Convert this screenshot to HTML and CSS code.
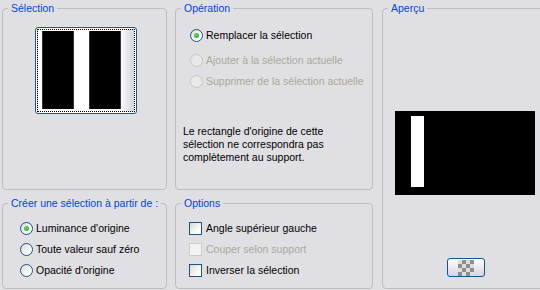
FILE: index.html
```html
<!DOCTYPE html>
<html lang="fr">
<head>
<meta charset="utf-8">
<title>Sélection</title>
<link rel="stylesheet" href="styles.css">
</head>
<body>
<div class="dialog">
  <div class="col col-1">
    <section class="group group-top">
      <div class="legend">Sélection</div>
      <div class="thumb">
        <div class="thumb-dots">
          <span class="blk"></span>
          <span class="spacer"></span>
          <span class="blk"></span>
        </div>
      </div>
    </section>
    <section class="group group-bottom">
      <div class="legend">Créer une sélection à partir de :</div>
      <div class="list list-src">
        <div class="row"><span class="radio on"></span>Luminance d'origine</div>
        <div class="row"><span class="radio"></span>Toute valeur sauf zéro</div>
        <div class="row"><span class="radio"></span>Opacité d'origine</div>
      </div>
    </section>
  </div>
  <div class="col col-2">
    <section class="group group-top">
      <div class="legend">Opération</div>
      <div class="list list-op">
        <div class="row"><span class="radio on"></span>Remplacer la sélection</div>
        <div class="row row-2 dis"><span class="radio off"></span>Ajouter à la sélection actuelle</div>
        <div class="row dis"><span class="radio off"></span>Supprimer de la sélection actuelle</div>
      </div>
      <p class="note">Le rectangle d'origine de cette<br>sélection ne correspondra pas<br>complètement au support.</p>
    </section>
    <section class="group group-bottom">
      <div class="legend">Options</div>
      <div class="list list-opt">
        <div class="row row-check"><span class="check"></span>Angle supérieur gauche</div>
        <div class="row row-check dis"><span class="check off"></span>Couper selon support</div>
        <div class="row row-check"><span class="check"></span>Inverser la sélection</div>
      </div>
    </section>
  </div>
  <div class="col col-3">
    <section class="group group-full">
      <div class="legend">Aperçu</div>
      <div class="preview"><span class="preview-bar"></span></div>
      <div class="btn"><span class="checker"></span></div>
    </section>
  </div>
</div>
</body>
</html>
```
FILE: styles.css
```css
html, body {
  margin: 0;
  padding: 0;
}
body {
  width: 540px;
  height: 290px;
  overflow: hidden;
  background: #e0dfe3;
  color: #000;
  font-family: "Liberation Sans", Arial, sans-serif;
  font-size: 10.5px;
  line-height: 13px;
}
.dialog {
  display: flex;
  align-items: flex-start;
  box-sizing: border-box;
  height: 290px;
  padding: 8px 0 0 2px;
}
.col {
  display: flex;
  flex-direction: column;
  gap: 13px;
  flex: none;
}
.col-1 { width: 165px; }
.col-2 { width: 198px; margin-left: 8px; }
.col-3 { width: 180px; margin-left: 9px; }

.group {
  border: 1px solid #bdbdc2;
  border-radius: 4px;
  box-sizing: border-box;
}
.group-top { height: 182px; }
.group-bottom { height: 86px; }
.group-full { height: 281px; }

.legend {
  width: max-content;
  margin: -7px 0 0 5px;
  padding: 0 3px;
  background: #e0dfe3;
  color: #0046d5;
  line-height: 13px;
}

/* selection thumbnail */
.thumb {
  width: 102px;
  height: 87px;
  margin: 12px 0 0 32px;
  padding: 1px;
  box-sizing: border-box;
  border: 1px solid #1f5589;
  border-radius: 3px;
  background: #fff;
}
.thumb-dots {
  display: flex;
  height: 100%;
  box-sizing: border-box;
  border: 1px dotted #000;
  padding: 1px 0 2px 4px;
  background: linear-gradient(90deg, #fff 85%, #d3d3de);
}
.blk {
  width: 32px;
  background: #000;
  border-left: 1px solid #333;
  border-right: 1px solid #333;
  box-sizing: border-box;
}
.spacer { width: 15px; }

/* radio / checkbox lists */
.list {
  display: flex;
  flex-direction: column;
}
.row {
  display: flex;
  align-items: center;
  gap: 3px;
  height: 21px;
  white-space: nowrap;
}
.row-check { gap: 4px; }
.list-src { margin-top: 8px; padding-left: 17px; }
.list-op { margin-top: 10px; padding-left: 14px; }
.list-op .row-2 { margin-top: 4px; }
.list-opt { margin-top: 8px; padding-left: 13px; }

.dis { color: #aca899; }

.radio {
  display: grid;
  place-items: center;
  flex: none;
  width: 13px;
  height: 13px;
  box-sizing: border-box;
  border: 1px solid #1d5281;
  border-radius: 50%;
  background: linear-gradient(135deg, #d9d9d4, #fff 75%);
}
.radio.on::after {
  content: "";
  width: 5px;
  height: 5px;
  border-radius: 50%;
  background: radial-gradient(circle at 40% 40%, #6ad866, #1f9f1f);
}
.radio.off {
  border-color: #cac8bb;
  background: #e8e8eb;
}

.check {
  flex: none;
  width: 13px;
  height: 13px;
  box-sizing: border-box;
  border: 1px solid #1d5281;
  background: linear-gradient(135deg, #d9d9d4, #fff 75%);
}
.check.off {
  border-color: #cfcdc2;
  background: #f3f3f3;
}

.note {
  margin: 33px 0 0 7px;
  line-height: 13px;
}

/* preview */
.preview {
  display: block;
  width: 140px;
  height: 84px;
  margin: 96px 0 0 12px;
  padding: 5px 0 0 16px;
  box-sizing: border-box;
  background: #000;
}
.preview-bar {
  display: block;
  width: 13px;
  height: 71px;
  background: #fff;
}
.btn {
  display: flex;
  align-items: center;
  justify-content: center;
  width: 38px;
  height: 19px;
  margin: 63px 0 0 64px;
  box-sizing: border-box;
  border: 1px solid #1d5281;
  border-radius: 3px;
  background: linear-gradient(#fff, #d5d4e0);
}
.checker {
  width: 16px;
  height: 16px;
  background: conic-gradient(#8e8e8e 90deg, #dedede 90deg 180deg, #8e8e8e 180deg 270deg, #dedede 270deg) 0 0 / 8px 8px;
}
```
